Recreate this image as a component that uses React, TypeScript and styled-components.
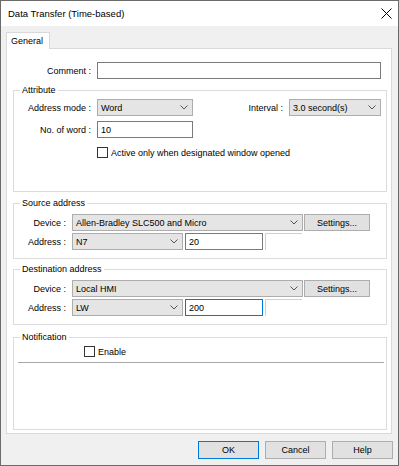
import { createGlobalStyle } from "styled-components";
import styled from "styled-components";

const GlobalStyle = createGlobalStyle`
    html, body {
        margin: 0;
        padding: 0;
        background: #f0f0f0;
    }
    * {
        box-sizing: border-box;
    }
`;

const Window = styled.div`
    width: 399px;
    height: 466px;
    border: 1px solid #6b6b6b;
    display: flex;
    flex-direction: column;
    font-family: "Liberation Sans", Arial, sans-serif;
    font-size: 9px;
    color: #000;
    background: #f0f0f0;
`;

const TitleBar = styled.div`
    height: 25px;
    background: #fff;
    display: flex;
    align-items: center;
    justify-content: space-between;
    padding: 0 6px 0 7px;
    font-size: 9.5px;
`;

const Body = styled.div`
    flex: 1;
    display: flex;
    flex-direction: column;
    padding: 6px 5px 0 5px;
`;

const TabStrip = styled.div`
    display: flex;
    height: 16px;
    position: relative;
    z-index: 1;
`;

const Tab = styled.div`
    width: 44px;
    height: 17px;
    background: #fff;
    border: 1px solid #d9d9d9;
    border-bottom: none;
    padding: 3px 0 0 4px;
`;

const Panel = styled.div`
    width: 386px;
    height: 386px;
    background: #fff;
    border: 1px solid #d9d9d9;
    padding: 13px 4px 0 6px;
    display: flex;
    flex-direction: column;
`;

const Row = styled.div<{ $mt?: number }>`
    display: flex;
    align-items: center;
    height: 17px;
    margin-top: ${(p) => p.$mt ?? 0}px;
`;

const Label = styled.div<{ $w: number }>`
    width: ${(p) => p.$w}px;
    text-align: right;
    margin-right: 6px;
    white-space: nowrap;
`;

const TextBox = styled.div<{ $w: number; $focused?: boolean }>`
    width: ${(p) => p.$w}px;
    height: 17px;
    border: 1px solid ${(p) => (p.$focused ? "#0078d7" : "#7a7a7a")};
    background: #fff;
    padding: 0 3px;
    display: flex;
    align-items: center;
`;

const Ghost = styled.div`
    width: 37px;
    height: 17px;
    border-top: 1px solid #cfcfcf;
    border-left: 1px solid #cfcfcf;
    margin-left: 2px;
`;

const Combo = styled.div<{ $w: number }>`
    width: ${(p) => p.$w}px;
    height: 17px;
    border: 1px solid #adadad;
    background: #e5e5e5;
    padding: 0 4px 0 3px;
    display: flex;
    align-items: center;
    justify-content: space-between;
`;

const Group = styled.div<{ $h: number; $mt: number; $pt: number }>`
    position: relative;
    width: 374px;
    height: ${(p) => p.$h}px;
    margin-top: ${(p) => p.$mt}px;
    border: 1px solid #dcdcdc;
    padding: ${(p) => p.$pt}px 0 0 0;
    display: flex;
    flex-direction: column;
`;

const Legend = styled.span`
    position: absolute;
    top: -7px;
    left: 6px;
    background: #fff;
    padding: 0 2px;
    line-height: 12px;
`;

const Spacer = styled.div`
    flex: 1;
`;

const Button = styled.div<{ $w: number; $default?: boolean }>`
    width: ${(p) => p.$w}px;
    height: 18px;
    border: 1px solid ${(p) => (p.$default ? "#0078d7" : "#adadad")};
    background: #e1e1e1;
    display: flex;
    align-items: center;
    justify-content: center;
`;

const CheckRow = styled.div<{ $ml: number; $mt: number }>`
    display: flex;
    align-items: center;
    gap: 3px;
    margin-left: ${(p) => p.$ml}px;
    margin-top: ${(p) => p.$mt}px;
    height: 11px;
`;

const CheckBox = styled.span`
    width: 11px;
    height: 11px;
    border: 1px solid #333;
    background: #fff;
`;

const Separator = styled.div`
    height: 1px;
    background: #a8a8a8;
    margin: 5px 2px 0 4px;
`;

const Footer = styled.div`
    display: flex;
    justify-content: flex-end;
    gap: 6px;
    padding: 7px 0 0 0;
`;

const Chevron = () => (
    <svg width="8" height="5" viewBox="0 0 8 5">
        <path d="M0.5 0.5 L4 4 L7.5 0.5" fill="none" stroke="#555" strokeWidth="1" />
    </svg>
);

const CloseIcon = () => (
    <svg width="11" height="11" viewBox="0 0 11 11">
        <path d="M0.5 0.5 L10.5 10.5 M10.5 0.5 L0.5 10.5" stroke="#000" strokeWidth="1" />
    </svg>
);

const Select = ({ w, value }: { w: number; value: string }) => (
    <Combo $w={w}>
        <span>{value}</span>
        <Chevron />
    </Combo>
);

const AddressGroup = ({
    title,
    device,
    addrType,
    addr,
    focused,
    mt,
}: {
    title: string;
    device: string;
    addrType: string;
    addr: string;
    focused?: boolean;
    mt: number;
}) => (
    <Group $h={56} $mt={mt} $pt={10}>
        <Legend>{title}</Legend>
        <Row>
            <Label $w={52}>Device :</Label>
            <Select w={231} value={device} />
            <Button $w={66} style={{ marginLeft: 1, height: 17 }}>
                Settings...
            </Button>
        </Row>
        <Row $mt={2}>
            <Label $w={52}>Address :</Label>
            <Select w={111} value={addrType} />
            <TextBox $w={78} $focused={focused} style={{ marginLeft: 2 }}>
                {addr}
            </TextBox>
            <Ghost />
        </Row>
    </Group>
);

const App = () => {
    return (
        <>
            <GlobalStyle />
            <Window>
                <TitleBar>
                    <span>Data Transfer (Time-based)</span>
                    <CloseIcon />
                </TitleBar>
                <Body>
                    <TabStrip>
                        <Tab>General</Tab>
                    </TabStrip>
                    <Panel>
                        <Row>
                            <Label $w={78}>Comment :</Label>
                            <TextBox $w={284} />
                        </Row>
                        <Group $h={102} $mt={11} $pt={8}>
                            <Legend>Attribute</Legend>
                            <Row style={{ paddingRight: 5 }}>
                                <Label $w={77}>Address mode :</Label>
                                <Select w={96} value="Word" />
                                <Spacer />
                                <Label $w={60}>Interval :</Label>
                                <Select w={92} value="3.0 second(s)" />
                            </Row>
                            <Row $mt={5}>
                                <Label $w={77}>No. of word :</Label>
                                <TextBox $w={96}>10</TextBox>
                            </Row>
                            <CheckRow $ml={83} $mt={9}>
                                <CheckBox />
                                <span>Active only when designated window opened</span>
                            </CheckRow>
                        </Group>
                        <AddressGroup
                            mt={11}
                            title="Source address"
                            device="Allen-Bradley SLC500 and Micro"
                            addrType="N7"
                            addr="20"
                        />
                        <AddressGroup
                            mt={10}
                            title="Destination address"
                            device="Local HMI"
                            addrType="LW"
                            addr="200"
                            focused
                        />
                        <Group $h={93} $mt={12} $pt={8}>
                            <Legend>Notification</Legend>
                            <CheckRow $ml={70} $mt={0}>
                                <CheckBox />
                                <span>Enable</span>
                            </CheckRow>
                            <Separator />
                        </Group>
                    </Panel>
                    <Footer>
                        <Button $w={61} $default>
                            OK
                        </Button>
                        <Button $w={61}>Cancel</Button>
                        <Button $w={61}>Help</Button>
                    </Footer>
                </Body>
            </Window>
        </>
    );
};

export default App;
